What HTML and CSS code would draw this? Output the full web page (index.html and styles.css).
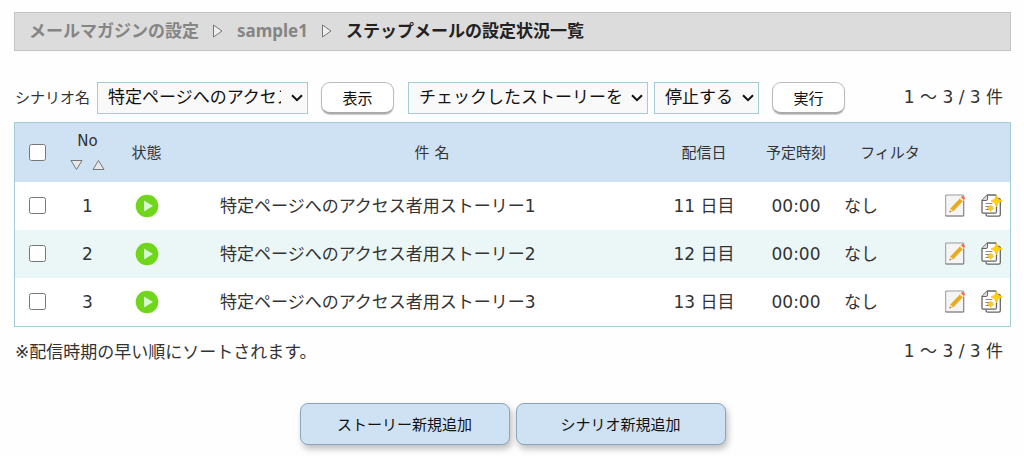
FILE: index.html
```html
<!DOCTYPE html>
<html lang="ja">
<head>
    <meta charset="UTF-8">
    <meta name="viewport" content="width=device-width, initial-scale=1.0">
    <title>ステップメールの設定状況一覧</title>
    <link rel="stylesheet" href="styles.css">
</head>
<body>
    <svg width="0" height="0" class="symbols" aria-hidden="true">
        <symbol id="arrow" viewBox="0 0 10 14">
            <path d="M.5 1v12L9 7z" fill="#eee" stroke="#777"/>
        </symbol>
        <symbol id="play" viewBox="0 0 24 24">
            <circle cx="12" cy="12" r="11.3" fill="#6fd61a"/>
            <path d="M9 6.5v11l9-5.5z" fill="#d5fbd0"/>
        </symbol>
        <symbol id="edit" viewBox="0 0 20 23">
            <path d="M.7 1h18v21h-18z" fill="#f5f5f5" stroke="#999"/>
            <path d="M18.7 6v16H.7" fill="none" stroke="#888"/>
            <path d="M4.5 18.3l1-4L16 3.2l3 2.9L8.4 17.2z" fill="#e8ab20"/>
            <path d="M4.5 18.3l1-4 2.9 2.9z" fill="#f4d9a5"/>
            <path d="M4.5 18.3l.4-1.6 1.2 1.2z" fill="#555"/>
            <path d="M14.7 4.5l1.3-1.3 3 2.9-1.3 1.3z" fill="#fff0b5"/>
            <path d="M16 3.2l1-1q.8-.5 1.6.3l1 1q.7.8 0 1.6l-.6 1z" fill="#ee6a5b"/>
        </symbol>
        <symbol id="copy" viewBox="0 0 22 23">
            <path d="M5 19v1.5q0 1.7 1.7 1.7h11q1.6 0 1.6-1.7V6q0-1.5-1.6-1.5H16" fill="#fff" stroke="#666" stroke-width="1.3"/>
            <path d="M6.5 1H14q1.5 0 1.5 1.5v15.2q0 1.500-1.500 1.500H2.500Q1 19.200 1 17.700V6.500z" fill="#fff" stroke="#666" stroke-width="1.3"/>
            <path d="M6.500 1v4q0 1.500-1.500 1.500H1" fill="#ddd" stroke="#666"/>
            <path d="M4.500 9.500h7M4.500 12.500h7M4.500 15.500h7" stroke="#888"/>
            <path d="M15.500 1.500q.8 4.700 5.800 5.500-5 .8-5.800 5.500Q14.700 7.800 10 7q4.700-.8 5.500-5.500z" fill="#ffcb14" stroke="#ffcb14"/>
            <path d="M9.500 11q.5 2.700 3.200 3.200-2.700.5-3.200 3.200-.5-2.700-3.200-3.200Q9 13.700 9.500 11z" fill="#ffcb14" stroke="#ffcb14"/>
        </symbol>
        <symbol id="chevron" viewBox="0 0 12 8">
            <path d="M1 1.200l5 5 5-5" fill="none" stroke="#111" stroke-width="2"/>
        </symbol>
    </svg>

    <nav class="breadcrumb">
        <a href="#">メールマガジンの設定</a>
        <svg class="crumb-arrow"><use href="#arrow"/></svg>
        <a href="#">sample1</a>
        <svg class="crumb-arrow"><use href="#arrow"/></svg>
        <span class="current">ステップメールの設定状況一覧</span>
    </nav>

    <div class="toolbar">
        <label for="scenario">シナリオ名</label>
        <div class="select scenario">
            <select id="scenario">
                <option>特定ページへのアクセス者用シナリオ</option>
            </select>
            <svg><use href="#chevron"/></svg>
        </div>
        <button type="button" class="btn">表示</button>
        <div class="select target">
            <select aria-label="対象">
                <option>チェックしたストーリーを</option>
            </select>
            <svg><use href="#chevron"/></svg>
        </div>
        <div class="select action">
            <select aria-label="操作">
                <option>停止する</option>
            </select>
            <svg><use href="#chevron"/></svg>
        </div>
        <button type="button" class="btn">実行</button>
        <span class="count">1 ～ 3 / 3 件</span>
    </div>

    <table class="stories">
        <colgroup>
            <col class="col-check">
            <col class="col-no">
            <col class="col-state">
            <col>
            <col class="col-day">
            <col class="col-time">
            <col class="col-filter">
            <col class="col-icon">
            <col class="col-icon">
        </colgroup>
        <thead>
            <tr>
                <th><input type="checkbox" aria-label="すべて選択"></th>
                <th>
                    No
                    <div class="sort">
                        <a href="#" aria-label="降順"><svg viewBox="0 0 13 11"><path d="M1 1h11L6.500 10z"/></svg></a>
                        <a href="#" aria-label="昇順"><svg viewBox="0 0 13 11"><path d="M1 10h11L6.500 1z"/></svg></a>
                    </div>
                </th>
                <th>状態</th>
                <th class="name">件 名</th>
                <th>配信日</th>
                <th>予定時刻</th>
                <th>フィルタ</th>
                <th></th>
                <th></th>
            </tr>
        </thead>
        <tbody>
            <tr>
                <td><input type="checkbox" aria-label="1を選択"></td>
                <td>1</td>
                <td><svg class="play"><use href="#play"/></svg></td>
                <td class="name">特定ページへのアクセス者用ストーリー1</td>
                <td>11 日目</td>
                <td>00:00</td>
                <td class="filter">なし</td>
                <td><a href="#" aria-label="編集"><svg class="edit"><use href="#edit"/></svg></a></td>
                <td><a href="#" aria-label="コピー"><svg class="copy"><use href="#copy"/></svg></a></td>
            </tr>
            <tr>
                <td><input type="checkbox" aria-label="2を選択"></td>
                <td>2</td>
                <td><svg class="play"><use href="#play"/></svg></td>
                <td class="name">特定ページへのアクセス者用ストーリー2</td>
                <td>12 日目</td>
                <td>00:00</td>
                <td class="filter">なし</td>
                <td><a href="#" aria-label="編集"><svg class="edit"><use href="#edit"/></svg></a></td>
                <td><a href="#" aria-label="コピー"><svg class="copy"><use href="#copy"/></svg></a></td>
            </tr>
            <tr>
                <td><input type="checkbox" aria-label="3を選択"></td>
                <td>3</td>
                <td><svg class="play"><use href="#play"/></svg></td>
                <td class="name">特定ページへのアクセス者用ストーリー3</td>
                <td>13 日目</td>
                <td>00:00</td>
                <td class="filter">なし</td>
                <td><a href="#" aria-label="編集"><svg class="edit"><use href="#edit"/></svg></a></td>
                <td><a href="#" aria-label="コピー"><svg class="copy"><use href="#copy"/></svg></a></td>
            </tr>
        </tbody>
    </table>

    <div class="note">
        <span>※配信時期の早い順にソートされます。</span>
        <span class="count">1 ～ 3 / 3 件</span>
    </div>

    <div class="actions">
        <button type="button" class="btn-add">ストーリー新規追加</button>
        <button type="button" class="btn-add">シナリオ新規追加</button>
    </div>
</body>
</html>
```

FILE: styles.css
```css
:root {
    --line: #a5cbd6;
    --blue: #cfe2f4;
    --text: #333;
}

* {
    box-sizing: border-box;
}

body {
    margin: 0;
    padding: 12px 13px 12px 14px;
    background: #fefefe;
    color: var(--text);
    font-family: "DejaVu Sans", "Noto Sans CJK JP", sans-serif;
    font-size: 17px;
    line-height: 24px;
}

button,
select {
    font-family: inherit;
    color: #111;
}

svg {
    display: block;
}

.symbols {
    position: absolute;
}

.breadcrumb {
    display: flex;
    align-items: center;
    gap: 14px;
    height: 39px;
    padding: 0 14px 2px;
    border: 1px solid #c4c4c4;
    background: #dcdcdc;
    font-family: "Noto Sans", "Noto Sans CJK JP", sans-serif;
    font-weight: bold;
}

.breadcrumb a {
    color: #858585;
    text-decoration: none;
}

.breadcrumb .current {
    color: #222;
}

.crumb-arrow {
    width: 10px;
    height: 14px;
}

/* search / bulk action */
.toolbar {
    display: flex;
    align-items: center;
    margin: 31px 0 8px;
    padding-left: 1px;
}

.toolbar label {
    margin-right: 7px;
    font-size: 15px;
}

.select {
    position: relative;
}

.select select {
    display: block;
    appearance: none;
    width: 100%;
    height: 32px;
    padding: 0 26px 2px 10px;
    border: 1px solid var(--line);
    border-radius: 0;
    background: #f9f9f9;
    font-size: 17px;
}

.select svg {
    position: absolute;
    top: 12px;
    right: 5px;
    width: 12px;
    height: 8px;
    pointer-events: none;
}

.scenario {
    width: 211px;
}

.target {
    width: 240px;
    margin-right: 6px;
}

.action {
    width: 105px;
}

.btn {
    width: 73px;
    height: 32px;
    margin: 0 14px 0 13px;
    padding: 0;
    border: 1px solid #bbb;
    border-bottom: 2px solid #aaa;
    border-radius: 9px;
    background: #fff;
    box-shadow: 0 1px 1px #ccc;
    font-size: 15px;
}

.count {
    margin-left: auto;
    padding: 0 8px 2px 0;
}

/* story list */
.stories {
    width: 100%;
    border: 1px solid var(--line);
    border-spacing: 0;
    table-layout: fixed;
    background: #fff;
}

.stories th,
.stories td {
    padding: 0;
    text-align: center;
    vertical-align: middle;
}

.stories th {
    height: 59px;
    background: var(--blue);
    font-size: 15px;
    font-weight: normal;
}

.stories td {
    height: 48px;
    padding-bottom: 1px;
}

.stories tbody tr:nth-child(even) {
    background: #ebf7f7;
}

.col-check {
    width: 45px;
}

.col-no {
    width: 55px;
}

.col-state {
    width: 63px;
}

.col-day {
    width: 88px;
}

.col-time {
    width: 96px;
}

.col-filter {
    width: 92px;
}

.col-icon {
    width: 37px;
}

.stories th.name {
    padding-left: 26px;
}

.stories td.name {
    padding-left: 42px;
    text-align: left;
}

.stories td.filter {
    text-align: left;
}

.stories input {
    display: block;
    width: 17px;
    height: 17px;
    margin: 0 auto;
}

.stories td svg {
    margin: 0 auto;
}

.sort {
    display: flex;
    justify-content: center;
    gap: 9px;
}

.sort svg {
    width: 13px;
    height: 24px;
    fill: #e8e8e8;
    stroke: #777;
}

.play {
    width: 24px;
    height: 24px;
}

.edit {
    width: 20px;
    height: 23px;
}

.copy {
    width: 22px;
    height: 23px;
}

.note {
    display: flex;
    align-items: center;
    margin-top: 12px;
    padding-left: 1px;
}

.actions {
    display: flex;
    justify-content: center;
    gap: 6px;
    margin-top: 38px;
}

.btn-add {
    width: 210px;
    height: 42px;
    padding: 0 6px 2px;
    border: 1px solid #8aa5bd;
    border-radius: 8px;
    background: var(--blue);
    box-shadow: 2px 4px 6px rgba(0, 0, 0, 0.25);
    font-size: 15px;
}
```
